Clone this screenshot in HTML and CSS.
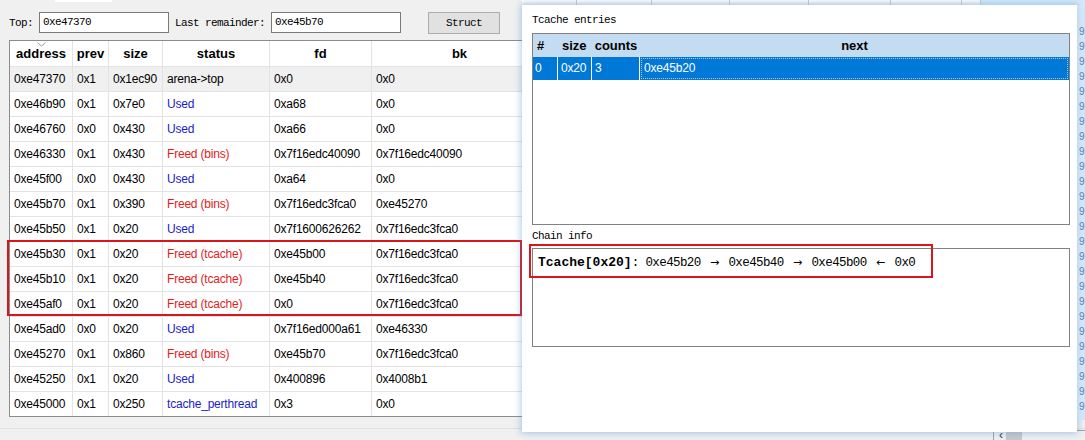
FILE: index.html
```html
<!DOCTYPE html>
<html>
<head>
<meta charset="utf-8">
<link rel="stylesheet" href="styles.css">
</head>
<body>
<div class="topstrip"><div class="tab"></div></div>
<div class="main">
  <div class="toolbar">
    <span class="mono lbl">Top:</span>
    <div class="mono field">0xe47370</div>
    <span class="mono lbl lbl2">Last remainder:</span>
    <div class="mono field">0xe45b70</div>
    <div class="mono btn">Struct</div>
  </div>
  <div class="heap">
    <div class="row head">
      <div class="sorted">address<svg class="chev" width="9" height="5" viewBox="0 0 9 5"><path d="M0.5 0.5 L4.5 4.2 L8.5 0.5" fill="none" stroke="#9a9a9a" stroke-width="1"/></svg></div>
      <div>prev</div><div>size</div><div>status</div><div>fd</div><div>bk</div>
    </div>
    <div class="row top"><div>0xe47370</div><div>0x1</div><div>0x1ec90</div><div>arena-&gt;top</div><div>0x0</div><div>0x0</div></div>
    <div class="row"><div>0xe46b90</div><div>0x1</div><div>0x7e0</div><div class="used">Used</div><div>0xa68</div><div>0x0</div></div>
    <div class="row"><div>0xe46760</div><div>0x0</div><div>0x430</div><div class="used">Used</div><div>0xa66</div><div>0x0</div></div>
    <div class="row"><div>0xe46330</div><div>0x1</div><div>0x430</div><div class="freed">Freed (bins)</div><div>0x7f16edc40090</div><div>0x7f16edc40090</div></div>
    <div class="row"><div>0xe45f00</div><div>0x0</div><div>0x430</div><div class="used">Used</div><div>0xa64</div><div>0x0</div></div>
    <div class="row"><div>0xe45b70</div><div>0x1</div><div>0x390</div><div class="freed">Freed (bins)</div><div>0x7f16edc3fca0</div><div>0xe45270</div></div>
    <div class="row"><div>0xe45b50</div><div>0x1</div><div>0x20</div><div class="used">Used</div><div>0x7f1600626262</div><div>0x7f16edc3fca0</div></div>
    <div class="row"><div>0xe45b30</div><div>0x1</div><div>0x20</div><div class="freed">Freed (tcache)</div><div>0xe45b00</div><div>0x7f16edc3fca0</div></div>
    <div class="row"><div>0xe45b10</div><div>0x1</div><div>0x20</div><div class="freed">Freed (tcache)</div><div>0xe45b40</div><div>0x7f16edc3fca0</div></div>
    <div class="row"><div>0xe45af0</div><div>0x1</div><div>0x20</div><div class="freed">Freed (tcache)</div><div>0x0</div><div>0x7f16edc3fca0</div></div>
    <div class="row"><div>0xe45ad0</div><div>0x0</div><div>0x20</div><div class="used">Used</div><div>0x7f16ed000a61</div><div>0xe46330</div></div>
    <div class="row"><div>0xe45270</div><div>0x1</div><div>0x860</div><div class="freed">Freed (bins)</div><div>0xe45b70</div><div>0x7f16edc3fca0</div></div>
    <div class="row"><div>0xe45250</div><div>0x1</div><div>0x20</div><div class="used">Used</div><div>0x400896</div><div>0x4008b1</div></div>
    <div class="row last"><div>0xe45000</div><div>0x1</div><div>0x250</div><div class="used">tcache_perthread</div><div>0x3</div><div>0x0</div></div>
  </div>
</div>
<div class="mark mark-left"></div>

<div class="bg-head">
  <div style="width:55px"></div><div style="width:75px"></div><div style="width:78px"></div><div style="width:79px"></div><div style="width:82px"></div><div style="width:71px"></div><div style="width:19px"></div><div class="bg-head-sel"></div>
</div>
<div class="bg-list">9<br>9<br>9<br>9<br>9<br>9<br>9<br>9<br>9<br>9<br>9<br>9<br>9<br>9<br>9<br>9<br>9<br>9<br>9<br>9<br>9<br>9<br>9<br>9<br>9<br>9</div>
<div class="bg-scroll"><span class="lt">&lsaquo;</span><span class="thumb"></span></div>

<div class="popup">
  <div class="mono plbl">Tcache entries</div>
  <div class="tbox">
    <div class="trow thead"><span class="c1">#</span><span class="c2">size</span><span class="c3">counts</span><span class="c4">next</span></div>
    <div class="trow tsel"><span class="c1">0</span><span class="c2">0x20</span><span class="c3">3</span><span class="c4 focus">0xe45b20</span></div>
  </div>
  <div class="mono plbl plbl2">Chain info</div>
  <div class="cbox">
    <div class="chain"><b>Tcache[0x20]</b>: 0xe45b20 <span class="arr">→</span> 0xe45b40 <span class="arr">→</span> 0xe45b00 <span class="arr">←</span> 0x0</div>
  </div>
  <div class="mark mark-chain"></div>
</div>
</body>
</html>
```
FILE: styles.css
```css
html, body {
  margin: 0;
  padding: 0;
}
body {
  width: 1085px;
  height: 440px;
  overflow: hidden;
  position: relative;
  background: #f0f0f0;
  font-family: "Liberation Sans", Arial, sans-serif;
  color: #000;
}
.mono {
  font-family: "Liberation Mono", "Courier New", monospace;
  font-size: 11px;
  letter-spacing: -0.6px;
}
.topstrip {
  height: 3px;
  display: flex;
}
.tab {
  margin-left: 55px;
  width: 57px;
  height: 2px;
  background: #ffffff;
}
.main {
  padding: 9px 0 11px 9px;
  border-bottom: 1px solid #e0e0e0;
}
.toolbar {
  display: flex;
  align-items: center;
  height: 22px;
}
.lbl {
  margin-right: 6px;
  white-space: nowrap;
}
.lbl2 {
  margin-left: 6px;
}
.field {
  width: 130px;
  height: 21px;
  box-sizing: border-box;
  border: 1px solid #7a7a7a;
  background: #fff;
  padding-left: 3px;
  line-height: 19px;
  align-self: flex-start;
}
.btn {
  margin-left: 27px;
  width: 72px;
  height: 22px;
  box-sizing: border-box;
  border: 1px solid #adadad;
  background: #e1e1e1;
  text-align: center;
  line-height: 20px;
  align-self: flex-start;
}
.heap {
  margin-top: 6px;
  display: grid;
  grid-template-columns: 63px 36px 54px 107px 102px 176px;
  width: max-content;
  border: 1px solid #8c8c8c;
  background: #fff;
}
.row {
  display: contents;
}
.row > div {
  height: 25px;
  box-sizing: border-box;
  border-right: 1px solid #e3e3e3;
  border-bottom: 1px solid #e3e3e3;
  padding-left: 4px;
  line-height: 24px;
  font-size: 12px;
  letter-spacing: -0.2px;
  white-space: nowrap;
  overflow: hidden;
}
.row.head > div {
  height: 26px;
  line-height: 25px;
  padding-left: 0;
  text-align: center;
  font-weight: bold;
  font-size: 13px;
  letter-spacing: 0;
  position: relative;
}
.row.top > div {
  background: #f0f0f0;
}
.row.last > div {
  border-bottom: 0;
  height: 24px;
}
.chev {
  position: absolute;
  left: 27px;
  top: 1px;
}
.used {
  color: #1c1cc8;
}
.freed {
  color: #e31c1c;
}
.mark {
  position: absolute;
  border: 2px solid #d9161c;
  box-sizing: border-box;
}
.mark-left {
  left: 7px;
  top: 240px;
  width: 515px;
  height: 76px;
  z-index: 2;
}
.bg-head {
  position: absolute;
  left: 522px;
  top: 0;
  width: 563px;
  height: 6px;
  display: flex;
  background: linear-gradient(#ffffff, #eaeaea);
  z-index: 3;
}
.bg-head > div {
  box-sizing: border-box;
  border-right: 1px solid #cdcdcd;
}
.bg-head > .bg-head-sel {
  flex: 1;
  background: #d6e9f9;
  border-right: 0;
}
.bg-list {
  position: absolute;
  left: 1077px;
  top: 6px;
  width: 8px;
  height: 414px;
  overflow: hidden;
  background: linear-gradient(to right, #eef6fd, #cfe6f9);
  color: #5c7fae;
  font-size: 10px;
  line-height: 15px;
  padding-left: 2px;
  padding-top: 18px;
  box-sizing: border-box;
  z-index: 3;
}
.bg-scroll {
  position: absolute;
  left: 993px;
  top: 430px;
  width: 92px;
  height: 10px;
  box-sizing: border-box;
  border-top: 1px solid #a0a0a0;
  border-left: 1px solid #a0a0a0;
  background: #f0f0f0;
  display: flex;
  align-items: flex-start;
  z-index: 3;
}
.bg-scroll .lt {
  font-size: 12px;
  line-height: 8px;
  margin-left: 5px;
  color: #333;
}
.bg-scroll .thumb {
  margin-left: 3px;
  width: 16px;
  height: 9px;
  background: #c8c8c8;
}
.popup {
  position: absolute;
  z-index: 10;
  left: 522px;
  top: 5px;
  width: 555px;
  height: 427px;
  box-sizing: border-box;
  background: #fff;
  padding: 8px 7px 0 10px;
  box-shadow: 0 0 7px 1px rgba(70, 140, 215, 0.45);
}
.plbl {
  height: 14px;
  line-height: 14px;
}
.plbl2 {
  margin-top: 4px;
}
.tbox {
  margin-top: 6px;
  height: 192px;
  box-sizing: border-box;
  border: 1px solid #828282;
  background: #fff;
}
.trow {
  display: flex;
  white-space: nowrap;
}
.trow span {
  box-sizing: border-box;
}
.c1 { width: 25px; padding-left: 4px; }
.c2 { width: 34px; }
.c3 { width: 48px; }
.c4 { flex: 1; }
.thead {
  height: 23px;
  line-height: 23px;
  background: #c4dcf2;
  font-weight: bold;
  font-size: 13px;
}
.thead .c3, .thead .c4 {
  text-align: center;
}
.thead .c2 {
  padding-left: 4px;
}
.tsel {
  height: 23px;
  line-height: 22px;
  background: #0078d7;
  color: #fff;
  font-size: 12px;
  letter-spacing: -0.2px;
}
.tsel span {
  border-right: 1px solid #ffffff;
  padding-left: 3px;
}
.tsel .c1 { padding-left: 2px; }
.tsel .c4 {
  border-right: 0;
  outline: 1px dotted #b8c8d8;
  outline-offset: -2px;
  padding-left: 4px;
}
.cbox {
  margin-top: 5px;
  height: 99px;
  box-sizing: border-box;
  border: 1px solid #828282;
  padding: 6px 0 0 5px;
}
.chain {
  font-family: "Liberation Mono", "Courier New", monospace;
  font-size: 12.5px;
  letter-spacing: -0.6px;
  line-height: 15px;
  white-space: nowrap;
}
.chain b {
  font-size: 13px;
  letter-spacing: 0;
}
.arr {
  display: inline-block;
  width: 14px;
  text-align: center;
  letter-spacing: 0;
  font-family: "DejaVu Sans", sans-serif;
  font-size: 11px;
}
.mark-chain {
  left: 7px;
  top: 239px;
  width: 404px;
  height: 34px;
}
```
